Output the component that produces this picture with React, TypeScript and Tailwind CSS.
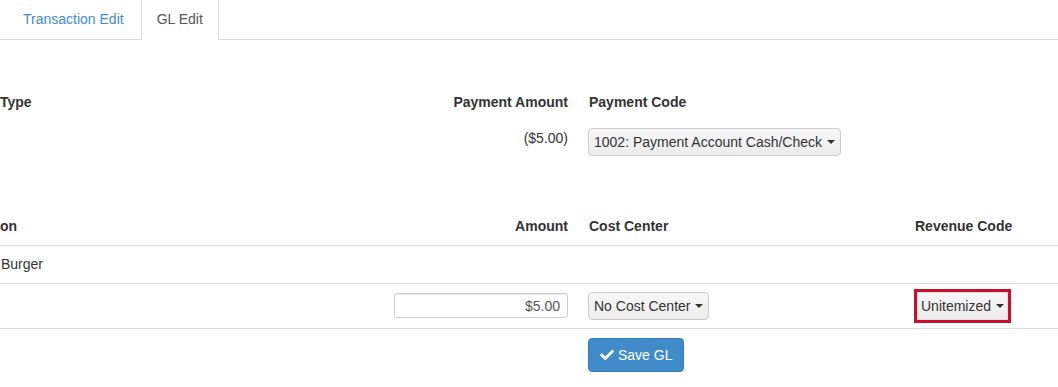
import { FaCheck } from 'react-icons/fa';

function Caret() {
  return <span className="ml-[5px] inline-block w-0 h-0 border-x-[4px] border-x-transparent border-t-[4px] border-t-[#333]" />;
}

function DropButton({ label, className = '' }: { label: string; className?: string }) {
  return (
    <button
      className={`inline-flex items-center h-[28px] rounded-[4px] border border-[#ccc] bg-gradient-to-b from-[#f7f7f7] to-[#ececec] text-[14px] text-[#333] ${className}`}
    >
      {label}
      <Caret />
    </button>
  );
}

export default function App() {
  return (
    <div className="w-[1058px] h-[387px] overflow-hidden bg-white text-[14px] leading-[20px] text-[#333] font-['Liberation_Sans',Arial,sans-serif]">
      {/* Tabs */}
      <div className="flex items-end h-[40px] border-b border-[#ddd]">
        <a className="ml-[8px] mr-[2px] h-[39px] px-[15px] pt-[9px] text-[#428bca]">Transaction Edit</a>
        <a className="h-[40px] -mb-px px-[15px] pt-[9px] bg-white border-x border-[#ddd] text-[#555]">GL Edit</a>
      </div>

      {/* Payment section */}
      <div className="mt-[50px] grid grid-cols-[386px_190px_1fr]">
        <div className="font-bold py-[2px]">Type</div>
        <div className="font-bold py-[2px] pr-[8px] text-right">Payment Amount</div>
        <div className="font-bold py-[2px] pl-[13px]">Payment Code</div>
        <div />
        <div className="pt-[14px] pr-[8px] text-right">($5.00)</div>
        <div className="pt-[14px] pl-[12px]">
          <DropButton label="1002: Payment Account Cash/Check" className="px-[5px]" />
        </div>
      </div>

      {/* GL lines */}
      <div className="mt-[52px] grid grid-cols-[386px_190px_330px_1fr]">
        <div className="font-bold pt-[8px] pb-[9px] border-b border-[#ddd]">on</div>
        <div className="font-bold pt-[8px] pb-[9px] pr-[8px] text-right border-b border-[#ddd]">Amount</div>
        <div className="font-bold pt-[8px] pb-[9px] pl-[13px] border-b border-[#ddd]">Cost Center</div>
        <div className="font-bold pt-[8px] pb-[9px] pl-[9px] border-b border-[#ddd]">Revenue Code</div>

        <div className="pt-[8px] pb-[9px] pl-[1px] border-b border-[#ddd]">Burger</div>
        <div className="border-b border-[#ddd]" />
        <div className="border-b border-[#ddd]" />
        <div className="border-b border-[#ddd]" />

        <div className="h-[45px] border-b border-[#ddd]" />
        <div className="h-[45px] border-b border-[#ddd] pt-[9px] pr-[8px] flex justify-end items-start">
          <input
            readOnly
            value="$5.00"
            className="w-[174px] h-[25px] px-[7px] text-right text-[14px] text-[#555] rounded-[3px] border border-[#ccc] shadow-[inset_0_1px_1px_rgba(0,0,0,0.075)] outline-none font-['Liberation_Sans',Arial,sans-serif]"
          />
        </div>
        <div className="h-[45px] border-b border-[#ddd] pt-[8px] pl-[12px]">
          <DropButton label="No Cost Center" className="px-[5px]" />
        </div>
        <div className="h-[45px] border-b border-[#ddd] pt-[5px] pl-[8px]">
          <div className="inline-block border-[3px] border-[#c8102e]">
            <DropButton label="Unitemized" className="px-[3px] border-[#ddd] rounded-none" />
          </div>
        </div>
      </div>

      <div className="pt-[9px] pl-[588px]">
        <button className="inline-flex items-center gap-[4px] h-[34px] px-[11px] rounded-[4px] border border-[#357ebd] bg-[#428bca] text-white text-[14px]">
          <FaCheck className="w-[14px] h-[14px]" />
          Save GL
        </button>
      </div>
    </div>
  );
}
